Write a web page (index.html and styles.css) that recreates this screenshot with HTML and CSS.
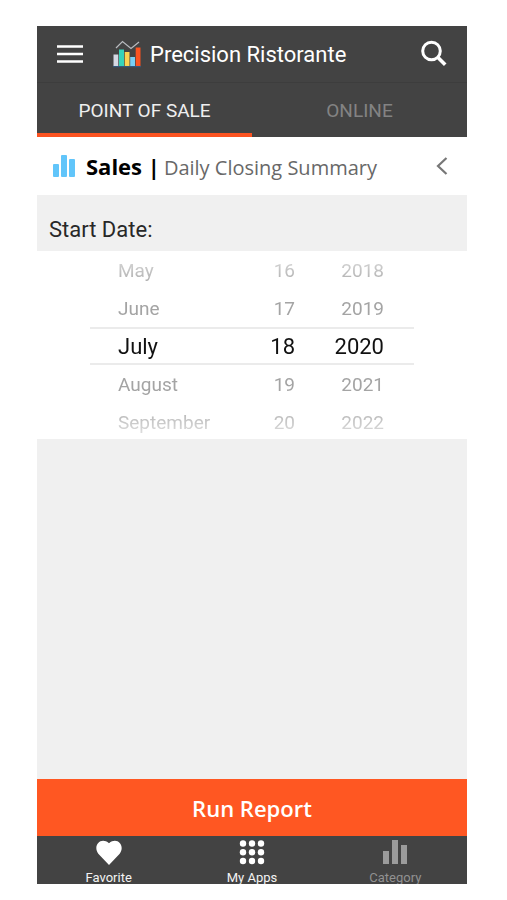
FILE: index.html
```html
<!DOCTYPE html>
<html lang="en">
<head>
<meta charset="utf-8">
<meta name="viewport" content="width=device-width, initial-scale=1">
<title>Precision Ristorante</title>
<link rel="stylesheet" href="styles.css">
</head>
<body>
<div class="app">
  <header class="topbar">
    <button class="icon-button" type="button" aria-label="Menu">
      <svg width="26" height="18" viewBox="0 0 26 18"><path d="M0 1.500h26M0 9h26M0 16.500h26" stroke="#fff" stroke-width="2.600"/></svg>
    </button>
    <h1 class="brand">
      <svg width="28" height="28" viewBox="0 0 28 28" aria-hidden="true">
        <path d="M0 26.500h28" stroke="#31577c" stroke-width="1.500"/>
        <path d="M3 8L9.500 1.500 18 8.500 26 2" fill="none" stroke="#b9bcc0" stroke-width="1.200"/>
        <path fill="#d5d8e3" d="M0.500 14.500h4.800V26H0.500z"/>
        <path fill="#36d3ba" d="M6 9.500h5V26H6z"/>
        <path fill="#fbd252" d="M11.700 12h4.800v14h-4.800z"/>
        <path fill="#78cff5" d="M17.200 17H22v9h-4.800z"/>
        <path fill="#fb5321" d="M22.700 7.500H27.500V26h-4.800z"/>
      </svg>
      <span>Precision Ristorante</span>
    </h1>
    <button class="icon-button" type="button" aria-label="Search">
      <svg width="26" height="28" viewBox="0 0 26 28"><circle cx="10.500" cy="11" r="8.800" fill="none" stroke="#fff" stroke-width="3"/><path d="M16.500 17l7.700 7.700" stroke="#fff" stroke-width="3.600"/></svg>
    </button>
  </header>
  <nav class="tabs" aria-label="Source">
    <button class="tab tab-active" type="button">POINT OF SALE</button>
    <button class="tab" type="button">ONLINE</button>
  </nav>
  <div class="report-title">
    <svg width="22" height="22" viewBox="0 0 22 22" fill="#61c5fa" aria-hidden="true"><rect y="9" width="6" height="13" rx="1"/><rect x="8" width="6" height="22" rx="1"/><rect x="16" y="4" width="6" height="18" rx="1"/></svg>
    <h2><strong>Sales |</strong><span>Daily Closing Summary</span></h2>
    <button class="icon-button" type="button" aria-label="Back">
      <svg width="12" height="18" viewBox="0 0 12 18"><path d="M10.500 1L2 9l8.500 8" fill="none" stroke="#777" stroke-width="2.200"/></svg>
    </button>
  </div>
  <main class="content">
    <h3 class="field-label" id="start-date">Start Date:</h3>
    <div class="picker" role="group" aria-labelledby="start-date">
      <div class="wheel wheel-month">
        <button type="button">May</button><button type="button">June</button><button class="selected" type="button">July</button><button type="button">August</button><button type="button">September</button>
      </div>
      <div class="wheel">
        <button type="button">16</button><button type="button">17</button><button class="selected" type="button">18</button><button type="button">19</button><button type="button">20</button>
      </div>
      <div class="wheel wheel-year">
        <button type="button">2018</button><button type="button">2019</button><button class="selected" type="button">2020</button><button type="button">2021</button><button type="button">2022</button>
      </div>
    </div>
  </main>
  <button class="run" type="button">Run Report</button>
  <nav class="bottom-nav" aria-label="Main">
    <a href="#favorite">
      <svg width="26" height="25" viewBox="0 0 26 25" fill="#fff"><path d="M13 25L2.300 13.700C-3.500 6 4.500-3.800 13 3.200 21.500-3.800 29.500 6 23.700 13.700z"/></svg>
      <span>Favorite</span>
    </a>
    <a href="#apps">
      <svg width="26" height="25" viewBox="0 0 26 25" fill="#fff"><circle cx="4" cy="3.500" r="3.200"/><circle cx="13" cy="3.500" r="3.200"/><circle cx="22" cy="3.500" r="3.200"/><circle cx="4" cy="12.300" r="3.200"/><circle cx="13" cy="12.300" r="3.200"/><circle cx="22" cy="12.300" r="3.200"/><circle cx="4" cy="21" r="3.200"/><circle cx="13" cy="21" r="3.200"/><circle cx="22" cy="21" r="3.200"/></svg>
      <span>My Apps</span>
    </a>
    <a class="muted" href="#category">
      <svg width="26" height="25" viewBox="0 0 26 25" fill="#9b9b9b"><path d="M1 11h6v13H1zM10 0h6v24h-6zM19 5h6v19h-6z"/></svg>
      <span>Category</span>
    </a>
  </nav>
</div>
</body>
</html>
```
FILE: styles.css
```css
* {
  box-sizing: border-box;
}

body {
  margin: 0;
  background: #fff;
  font-family: Roboto, sans-serif;
}

button {
  padding: 0;
  border: 0;
  background: none;
  color: inherit;
  font: inherit;
}

svg {
  display: block;
  flex: none;
}

h1, h2, h3 {
  margin: 0;
  font-weight: 400;
}

.app {
  display: flex;
  flex-direction: column;
  min-height: 100vh;
  padding: 26px 40px 16px 37px;
}

.topbar {
  display: flex;
  align-items: center;
  height: 56px;
  padding: 0 20px;
  background: #434343;
  color: #fff;
}

.brand {
  display: flex;
  flex: 1;
  align-items: center;
  gap: 9px;
  margin-left: 30px;
  font-size: 22px;
}

.tabs {
  display: flex;
  height: 55px;
  border-top: 1px solid #3d3d3d;
  background: #434343;
}

.tab {
  flex: 1;
  padding-top: 4px;
  border-bottom: 4px solid transparent;
  color: #838383;
  font-size: 19px;
}

.tab-active {
  border-bottom-color: #fb5321;
  color: #efefef;
}

.report-title {
  display: flex;
  align-items: center;
  gap: 11px;
  height: 58px;
  padding: 0 19px 0 16px;
}

.report-title h2 {
  display: flex;
  flex: 1;
  align-items: baseline;
  gap: 4px;
  color: #686868;
  font-family: "Open Sans", sans-serif;
  font-size: 20px;
  white-space: nowrap;
}

.report-title strong {
  color: #000;
  font-size: 22px;
  font-weight: 700;
}

.content {
  flex: 1;
  background: #f0f0f0;
}

.field-label {
  height: 56px;
  padding: 12px 12px 0;
  color: #282828;
  font-size: 22px;
  line-height: 46px;
}

.picker {
  display: flex;
  height: 188px;
  padding: 0 53px;
  overflow: hidden;
  background: #fff;
}

.wheel {
  width: 60px;
  mask-image: linear-gradient(#0004, #000 20%, #000 80%, #0004);
}

.wheel-month {
  flex: 1;
}

.wheel-year {
  width: 119px;
}

.wheel button {
  display: block;
  width: 100%;
  height: 38px;
  color: #a4a4a4;
  font-size: 19px;
  text-align: right;
}

.wheel-month button {
  padding-left: 28px;
  text-align: left;
}

.wheel-year button {
  padding-right: 30px;
}

.wheel .selected {
  border-top: 2px solid #ebebeb;
  border-bottom: 2px solid #ebebeb;
  color: #111;
  font-size: 22px;
}

.run {
  height: 57px;
  background: #ff5722;
  color: #fff;
  font-family: "Open Sans", sans-serif;
  font-size: 22px;
  font-weight: 600;
}

.bottom-nav {
  display: flex;
  height: 48px;
  overflow: hidden;
  background: #434343;
}

.bottom-nav a {
  display: flex;
  flex: 1;
  flex-direction: column;
  align-items: center;
  gap: 5px;
  padding-top: 4px;
  color: #f3f3f3;
  font-size: 13px;
  line-height: 16px;
  text-decoration: none;
}

.bottom-nav .muted {
  color: #919191;
}
```
